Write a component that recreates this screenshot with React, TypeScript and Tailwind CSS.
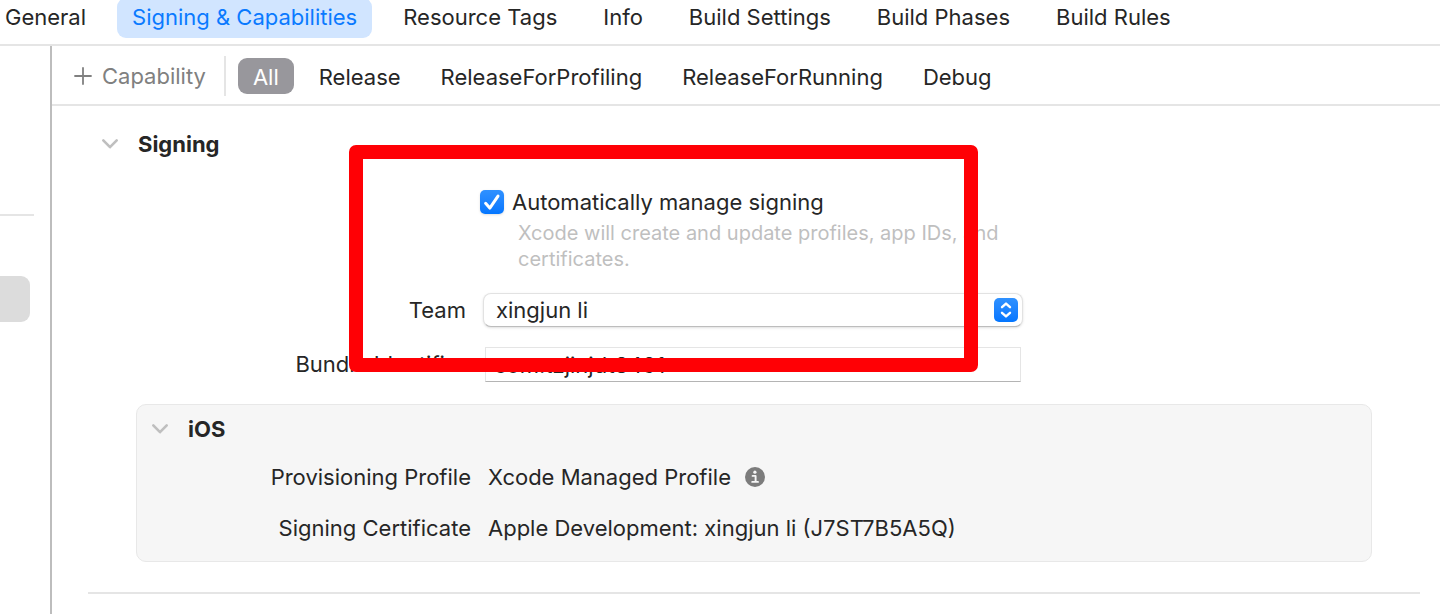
import { useId, useState } from "react";

const tabs = ["General", "Signing & Capabilities", "Resource Tags", "Info", "Build Settings", "Build Phases", "Build Rules"];
const filters = ["All", "Release", "ReleaseForProfiling", "ReleaseForRunning", "Debug"];

function Chevron() {
  return (
    <svg width="18" height="12" viewBox="0 0 18 12" fill="none" stroke="#bfbfbf" strokeWidth="2.6" strokeLinecap="round" strokeLinejoin="round" aria-hidden="true">
      <path d="M2.3 2.4 9 9.2l6.7-6.8" />
    </svg>
  );
}

function InfoRow({ label, children }: { label: string; children: React.ReactNode }) {
  return (
    <div className="flex items-center gap-[17px]">
      <dt className="w-[334px] shrink-0 text-right">{label}</dt>
      <dd className="flex items-center gap-3.5">{children}</dd>
    </div>
  );
}

export default function App() {
  const [tab, setTab] = useState("Signing & Capabilities");
  const [filter, setFilter] = useState("All");
  const [auto, setAuto] = useState(true);
  const id = useId();

  return (
    <div className="flex min-h-screen flex-col overflow-hidden bg-white font-['Inter',sans-serif] text-[22px] leading-7 text-[#262626]">
      <nav className="-mt-0.5 -ml-2.5 flex gap-4 border-b-2 border-[#e5e5e5] pb-1.5">
        {tabs.map((t) => (
          <button
            key={t}
            type="button"
            onClick={() => setTab(t)}
            className={
              t === tab
                ? "h-10 shrink-0 rounded-[9px] bg-[#d1e5ff] px-[15px] pb-0.5 whitespace-nowrap text-[#0a7aff]"
                : "h-10 shrink-0 rounded-[9px] px-[15px] pb-0.5 whitespace-nowrap"
            }
          >
            {t}
          </button>
        ))}
      </nav>

      <div className="flex grow">
        <aside className="w-[52px] shrink-0 border-r-2 border-[#bdbdbd] pt-[168px]">
          <hr className="w-[34px] border-t-2 border-[#e5e5e5]" />
          <div className="mt-[60px] h-[46px] w-[30px] rounded-r-[9px] bg-[#dcdcdc]" />
        </aside>

        <main className="min-w-0 grow">
          <div className="flex h-[60px] items-center border-b-2 border-[#e5e5e5] pt-0.5 pl-[22px]">
            <button type="button" className="flex items-center gap-2.5 text-[#808080]">
              <svg width="18" height="18" viewBox="0 0 18 18" stroke="#808080" strokeWidth="1.8" strokeLinecap="round" aria-hidden="true">
                <path d="M9 1v16M1 9h16" />
              </svg>
              Capability
            </button>
            <div className="mr-3 ml-[18px] h-10 w-0.5 bg-[#e5e5e5]" />
            <div className="flex gap-2.5">
              {filters.map((f) => (
                <button
                  key={f}
                  type="button"
                  onClick={() => setFilter(f)}
                  className={
                    f === filter
                      ? "h-9 rounded-[9px] bg-[#98979c] px-[15px] pt-0.5 text-white"
                      : "h-9 rounded-[9px] px-[15px] pt-0.5"
                  }
                >
                  {f}
                </button>
              ))}
            </div>
          </div>

          <section className="relative pr-[68px] pl-[84px]">
            <h2 className="-ml-[35px] flex items-center gap-[19px] pt-6 font-bold">
              <Chevron />
              Signing
            </h2>

            <div className="grid grid-cols-[330px_minmax(0,540px)] gap-x-[17px] pt-[30px]">
              <div className="col-start-2 -ml-[3px]">
                <label className="flex items-center gap-2">
                  <input type="checkbox" checked={auto} onChange={(e) => setAuto(e.target.checked)} className="peer sr-only" />
                  <span className="flex size-6 items-center justify-center rounded-[5px] bg-linear-to-b from-[#2f91ff] to-[#0376ff] shadow-sm">
                    {auto && (
                      <svg width="18" height="18" viewBox="0 0 18 18" fill="none" stroke="white" strokeWidth="3" strokeLinecap="round" strokeLinejoin="round" aria-hidden="true">
                        <path d="m2.6 10.3 4.2 4.8 8.2-12" />
                      </svg>
                    )}
                  </span>
                  Automatically manage signing
                </label>
                <p className="mt-1 pl-[38px] text-xl leading-[26px] text-[#bfbfbf]">
                  Xcode will create and update profiles, app IDs, and certificates.
                </p>
              </div>

              <label htmlFor={id + "team"} className="mt-[21px] text-right leading-[34px]">
                Team
              </label>
              <div className="relative mt-[21px]">
                <select id={id + "team"} className="block h-[34px] w-full appearance-none rounded-lg border border-[#e2e2e2] border-b-[#bdbdbd] bg-white pl-3 shadow-sm">
                  <option>xingjun li</option>
                </select>
                <span className="pointer-events-none absolute top-[5px] right-[5px] flex size-6 items-center justify-center rounded-[5px] bg-linear-to-b from-[#2f91ff] to-[#0376ff]">
                  <svg width="12" height="18" viewBox="0 0 12 18" fill="none" stroke="white" strokeWidth="2.4" strokeLinecap="round" strokeLinejoin="round" aria-hidden="true">
                    <path d="M2 6.2 6 2.6l4 3.6M2 11.8l4 3.6 4-3.6" />
                  </svg>
                </span>
              </div>

              <label htmlFor={id + "bundle"} className="mt-5 text-right leading-[34px]">
                Bundle Identifier
              </label>
              <div className="mt-5 px-0.5">
                <input
                  id={id + "bundle"}
                  defaultValue="com.tzjinjdt8491"
                  className="block h-[35px] w-full border border-[#e5e5e5] border-b-[#b4b4b4] bg-white pl-2"
                />
              </div>
            </div>

            <div className="mt-[22px] h-[158px] rounded-[10px] border border-[#e8e8e8] bg-[#f6f6f6]">
              <h3 className="flex items-center gap-[19px] pt-2.5 pl-3.5 font-bold">
                <Chevron />
                iOS
              </h3>
              <dl className="mt-5 flex flex-col gap-[23px]">
                <InfoRow label="Provisioning Profile">
                  Xcode Managed Profile
                  <button type="button" aria-label="Profile information">
                    <svg width="20" height="20" viewBox="0 0 20 20" className="block" aria-hidden="true">
                      <circle cx="10" cy="10" r="10" fill="#7c7c7c" />
                      <circle cx="9.9" cy="5.2" r="1.6" fill="#f6f6f6" />
                      <path d="M7.6 8.9h3v5.8M7.2 14.9h5.8" fill="none" stroke="#f6f6f6" strokeWidth="1.9" strokeLinecap="round" strokeLinejoin="round" />
                    </svg>
                  </button>
                </InfoRow>
                <InfoRow label="Signing Certificate">Apple Development: xingjun li (J7ST7B5A5Q)</InfoRow>
              </dl>
            </div>

            <div className="pointer-events-none absolute top-[39px] left-[297px] h-[227px] w-[629px] rounded-[7px] border-[14px] border-[#ff0005]" />
          </section>

          <hr className="mt-[30px] mr-5 mb-5 ml-9 border-t-2 border-[#e5e5e5]" />
        </main>
      </div>
    </div>
  );
}
